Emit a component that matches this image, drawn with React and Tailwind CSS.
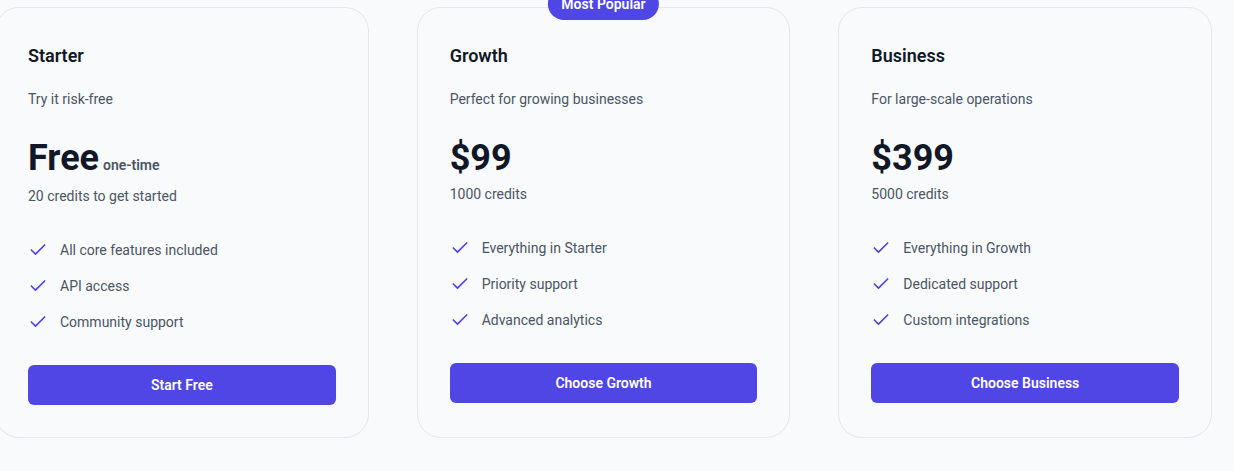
import React from 'react';
import { Check } from 'lucide-react';

const plans = [
  {
    name: 'Starter',
    description: 'Try it risk-free',
    price: 'Free',
    suffix: 'one-time',
    credits: '20 credits to get started',
    features: ['All core features included', 'API access', 'Community support'],
    cta: 'Start Free',
  },
  {
    name: 'Growth',
    description: 'Perfect for growing businesses',
    price: '$99',
    credits: '1000 credits',
    features: ['Everything in Starter', 'Priority support', 'Advanced analytics'],
    cta: 'Choose Growth',
    popular: true,
  },
  {
    name: 'Business',
    description: 'For large-scale operations',
    price: '$399',
    credits: '5000 credits',
    features: ['Everything in Growth', 'Dedicated support', 'Custom integrations'],
    cta: 'Choose Business',
  },
];

const PlanCard = ({ plan }) => (
  <div className="relative rounded-3xl border border-gray-200 bg-gray-50 p-8">
    {plan.popular && (
      <span className="absolute -top-5 left-1/2 -translate-x-1/2 rounded-full bg-[#4f46e5] px-[13px] py-1.5 text-sm font-semibold leading-5 text-white">
        Most Popular
      </span>
    )}

    <h3 className="mt-[2px] text-lg font-semibold leading-7 text-gray-900">{plan.name}</h3>
    <p className="mt-[19px] text-sm leading-5 text-gray-600">{plan.description}</p>

    {/* Price */}
    <div className="mt-[29px] flex items-baseline gap-1">
      <span className="text-4xl font-bold leading-10 text-gray-900">{plan.price}</span>
      {plan.suffix && (
        <span className="text-sm font-semibold leading-5 text-gray-600">{plan.suffix}</span>
      )}
    </div>
    <p className={`${plan.suffix ? 'mt-[8px]' : 'mt-[6px]'} text-sm leading-5 text-gray-600`}>
      {plan.credits}
    </p>

    {/* Features */}
    <ul className="mt-[34px] space-y-4">
      {plan.features.map((feature) => (
        <li key={feature} className="flex items-center gap-3">
          <Check className="h-5 w-5 shrink-0 text-[#4f46e5]" strokeWidth={2} />
          <span className="text-sm leading-5 text-gray-600">{feature}</span>
        </li>
      ))}
    </ul>

    <button className="mt-[33px] flex h-10 w-full items-center justify-center rounded-md bg-[#4f46e5] text-sm font-semibold text-white">
      {plan.cta}
    </button>
  </div>
);

export default function App() {
  return (
    <div className="min-h-screen overflow-hidden bg-gray-50 font-[family-name:Roboto,'Liberation_Sans',sans-serif]">
      <div className="-ml-[5px] grid w-[1217px] grid-cols-3 gap-12 pt-[7px]">
        {plans.map((plan) => (
          <PlanCard key={plan.name} plan={plan} />
        ))}
      </div>
    </div>
  );
}
